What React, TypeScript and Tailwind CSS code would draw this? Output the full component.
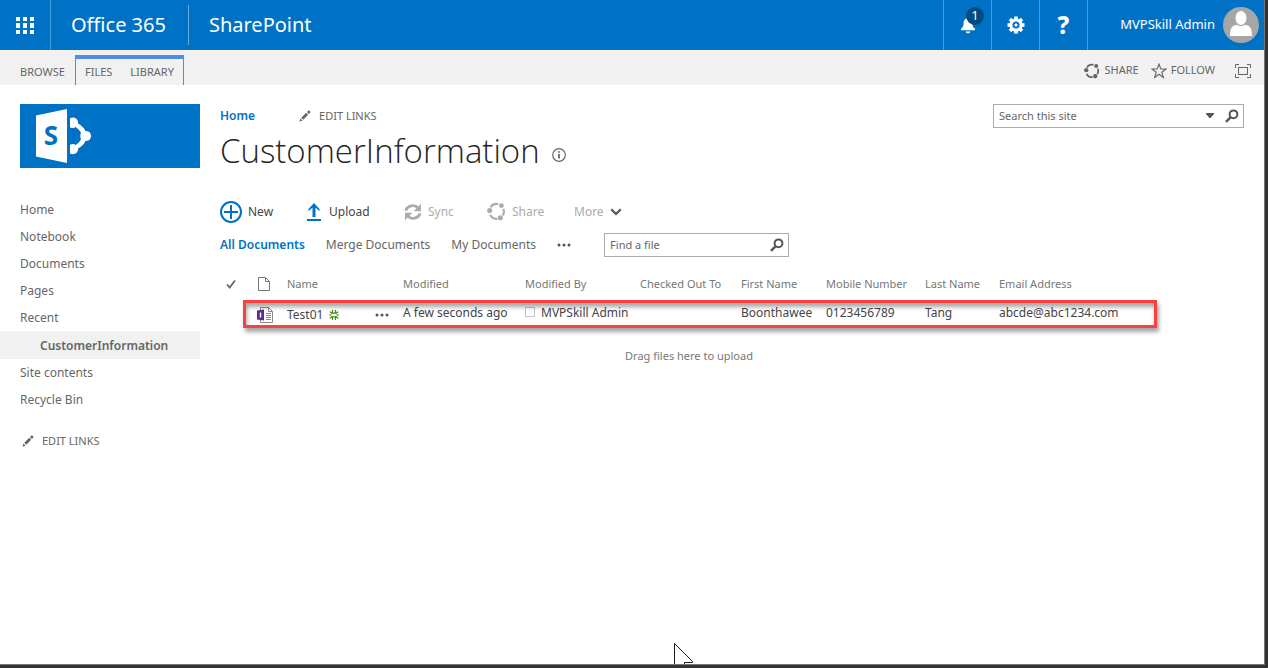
import type { ReactNode } from "react";
import clsx from "clsx";

const navItems = [
  { name: "Home" },
  { name: "Notebook" },
  { name: "Documents" },
  { name: "Pages" },
  { name: "Recent" },
  { name: "CustomerInformation", current: true },
  { name: "Site contents" },
  { name: "Recycle Bin" },
];

const columns = [
  { name: "Name", width: "w-[116px]" },
  { name: "Modified", width: "w-[122px]" },
  { name: "Modified By", width: "w-[115px]" },
  { name: "Checked Out To", width: "w-[101px]" },
  { name: "First Name", width: "w-[85px]" },
  { name: "Mobile Number", width: "w-[99px]" },
  { name: "Last Name", width: "w-[74px]" },
  { name: "Email Address", width: "" },
];

function WaffleIcon() {
  return (
    <svg viewBox="0 0 18 17" fill="currentColor" className="h-[17px] w-[18px]">
      {[0, 6, 13].map((y) =>
        [0, 7, 14].map((x) => (
          <rect
            key={`${x}-${y}`}
            x={x}
            y={y}
            width="4"
            height={y === 6 ? 5 : 4}
          />
        )),
      )}
    </svg>
  );
}

function BellIcon() {
  return (
    <svg viewBox="0 0 16 18" fill="currentColor" className="h-[18px] w-4">
      <path d="M6.6 2.2C6.8 1 9.2 1 9.4 2.2c2.2.8 3 2.6 3 5 0 3.200.8 4.200 2.600 5.600v1.400H1v-1.400c1.800-1.400 2.600-2.400 2.600-5.600 0-2.400.8-4.200 3-5z" />
      <path d="M5.600 15.400h4.800c-.4 1.300-1.300 1.900-2.400 1.900s-2-.6-2.400-1.900z" />
    </svg>
  );
}

function GearIcon() {
  return (
    <svg viewBox="0 0 18 18" fill="currentColor" className="size-[18px]">
      {[0, 45, 90, 135].map((angle) => (
        <rect
          key={angle}
          x="7.200"
          y="0.500"
          width="3.600"
          height="17"
          transform={`rotate(${angle} 9 9)`}
        />
      ))}
      <circle cx="9" cy="9" r="6.600" />
      <circle cx="9" cy="9" r="3.600" fill="#0072c6" />
      <circle cx="9" cy="9" r="1.600" />
    </svg>
  );
}

function ShareIcon({ className }: { className: string }) {
  return (
    <svg
      viewBox="0 0 20 20"
      fill="none"
      stroke="currentColor"
      strokeWidth="2.200"
      className={className}
    >
      <path d="M3.600 5.500A7.700 7.700 0 0 1 11.800 2.300M17.200 7.200a7.700 7.700 0 0 1-.6 6.900M10.800 17.700A7.700 7.700 0 0 1 3.200 13.500" />
      <circle cx="15.200" cy="3.800" r="2.500" fill="currentColor" stroke="none" />
      <circle cx="14" cy="16.600" r="2.700" fill="currentColor" stroke="none" />
      <circle cx="2.800" cy="9" r="2.700" fill="currentColor" stroke="none" />
    </svg>
  );
}

function StarIcon() {
  return (
    <svg
      viewBox="0 0 16 16"
      fill="none"
      stroke="currentColor"
      strokeWidth="1.100"
      className="size-4"
    >
      <path d="M8 1l1.800 5H15l-4.200 3.200 1.600 5.300L8 11.300l-4.400 3.200 1.600-5.300L1 6h5.200z" />
    </svg>
  );
}

function FocusIcon() {
  return (
    <svg
      viewBox="0 0 16 14"
      fill="none"
      stroke="currentColor"
      className="h-[14px] w-4"
    >
      <path d="M.5 4V.5H4M12 .5h3.500V4M15.500 10v3.500H12M4 13.500H.5V10" />
      <rect x="3.500" y="3.500" width="9" height="7" />
    </svg>
  );
}

function PencilIcon() {
  return (
    <svg viewBox="0 0 12 12" fill="currentColor" className="size-3">
      <path d="M.3 11.700l1.200-3.200 2 2zM2.300 7.700l4.900-4.900 2 2-4.900 4.900zM8 2.100L9.300.8c.8-.8 2.700 1.100 1.900 1.900L9.900 4z" />
    </svg>
  );
}

function SearchIcon() {
  return (
    <svg
      viewBox="0 0 14 14"
      fill="none"
      stroke="currentColor"
      strokeWidth="2"
      className="size-[14px]"
    >
      <circle cx="8.500" cy="5.300" r="3.900" />
      <path d="M5.700 8.200L1 12.800" strokeWidth="2.400" />
    </svg>
  );
}

function NewIcon() {
  return (
    <svg
      viewBox="0 0 22 22"
      fill="none"
      stroke="#0072c6"
      strokeWidth="2"
      className="size-[22px]"
    >
      <circle cx="11" cy="11" r="10" />
      <path d="M11 4v14M4 11h14" />
    </svg>
  );
}

function UploadIcon() {
  return (
    <svg viewBox="0 0 14 18" fill="#0072c6" className="h-[18px] w-[14px]">
      <path d="M7 0l5.500 6v2.300L8.500 4.600V14h-3V4.600l-4 3.700V6z" />
      <rect y="16" width="14" height="2" />
    </svg>
  );
}

function SyncIcon() {
  return (
    <svg
      viewBox="0 0 18 18"
      fill="none"
      stroke="currentColor"
      strokeWidth="2.800"
      className="size-[18px]"
    >
      <path d="M1.800 7.600C3.300 2.500 10.500 1 14.200 5M16.200 10.400C14.700 15.500 7.500 17 3.800 13" />
      <path
        d="M17 .8v7.400H9.600zM1 17.200V9.800h7.400z"
        fill="currentColor"
        stroke="none"
      />
    </svg>
  );
}

function EllipsisIcon() {
  return (
    <svg viewBox="0 0 14 4" fill="#555" className="h-1 w-[14px]">
      <circle cx="2" cy="2" r="1.500" />
      <circle cx="7" cy="2" r="1.500" />
      <circle cx="12" cy="2" r="1.500" />
    </svg>
  );
}

function FileIcon() {
  return (
    <svg
      viewBox="0 0 12 14"
      fill="none"
      stroke="#777"
      className="h-[14px] w-3"
    >
      <path d="M.5.5h7l4 4v9H.5zM7.500.5v4h4" />
    </svg>
  );
}

function FormIcon() {
  return (
    <svg viewBox="0 0 16 16" fill="none" className="size-4">
      <path d="M3.500 3V.5h8l4 4v11h-12V13M11.500.5v4h4" stroke="#8a8a8a" />
      <path d="M9 6.500h5M9 8.500h5M9 10.500h5M9 12.500h5" stroke="#8a8a8a" />
      <path d="M0 3.500L7 2.500v11l-7-1z" fill="#5c2d91" />
      <path d="M3.500 5.500v5" stroke="#fff" strokeWidth="1.400" />
    </svg>
  );
}

function NewItemIcon() {
  return (
    <svg
      viewBox="0 0 10 10"
      fill="none"
      stroke="#3d8c00"
      strokeWidth="1.200"
      className="size-[10px]"
    >
      <path d="M3.500 0v3M6.500 0v3M3.500 7v3M6.500 7v3M0 5h2.600M7.400 5H10M.8 1.600l2.200 1.900M9.200 1.600L7 3.500M.8 8.400L3 6.500M9.200 8.400L7 6.500" />
      <path d="M2.800 3.200h4.400M2.800 6.800h4.400" />
    </svg>
  );
}

function SiteLogo() {
  return (
    <svg viewBox="0 0 180 64" className="h-16 w-full bg-[#0072c6]">
      <path d="M16 11.500L47 5v54l-31-6.500z" fill="#fff" />
      <text
        x="31"
        y="41"
        textAnchor="middle"
        fontFamily="Open Sans, sans-serif"
        fontSize="26"
        fontWeight="700"
        fill="#0072c6"
      >
        S
      </text>
      <path
        d="M50 14.500c3-2 7.500-.5 8 3.500v1.500c3.500 2 6 4.500 7.500 7.500 7.500-.5 7.500 10.500 0 10-1.500 3-4 5.500-7.500 7.500.5 4.500-4 7-8 5v-8.700c2-1.200 4-1.200 5.500.2 2.500-1.500 4.500-3.500 5.500-6-1-2-1-4 0-6-1-2.500-3-4.500-5.500-6-1.500 1.400-3.500 1.400-5.500.2z"
        fill="#fff"
      />
    </svg>
  );
}

function HeaderButton({
  label,
  children,
}: {
  label: string;
  children: ReactNode;
}) {
  return (
    <button
      aria-label={label}
      className="relative flex w-12 items-center justify-center border-l border-[#4c9cd7]"
    >
      {children}
    </button>
  );
}

function EditLinks() {
  return (
    <button className="flex items-center gap-2 text-[11px] text-[#666]">
      <PencilIcon />
      EDIT LINKS
    </button>
  );
}

function SuiteBar() {
  return (
    <header className="flex h-[50px] bg-[#0072c6] text-white">
      <button
        aria-label="App launcher"
        className="flex w-[51px] items-center justify-center border-r border-[#4c9cd7]"
      >
        <WaffleIcon />
      </button>
      <div className="flex items-center text-xl">
        <a href="#" className="pr-[22px] pl-5">
          Office 365
        </a>
        <span className="h-10 w-px bg-[#66aadd]" />
        <a href="#" className="px-5">
          SharePoint
        </a>
      </div>
      <div className="ml-auto flex">
        <HeaderButton label="Notifications">
          <BellIcon />
          <span className="absolute top-[7px] right-[7px] flex size-[18px] items-center justify-center rounded-full bg-[#004b7f] text-[13px]">
            1
          </span>
        </HeaderButton>
        <HeaderButton label="Settings">
          <GearIcon />
        </HeaderButton>
        <HeaderButton label="Help">
          <span className="text-2xl font-extrabold">?</span>
        </HeaderButton>
        <button className="flex w-[177px] items-center justify-end gap-2 border-l border-[#4c9cd7] pr-[5px] text-[13px]">
          MVPSkill Admin
          <svg viewBox="0 0 36 36" className="size-9">
            <circle cx="18" cy="18" r="18" fill="#a6a6a6" />
            <ellipse cx="18" cy="11" rx="5.500" ry="7" fill="#fff" />
            <path
              d="M7 29c0-7 1.500-10.500 7-11.300 2.300 1.800 5.700 1.800 8 0 5.500.8 7 4.300 7 11.300z"
              fill="#fff"
            />
          </svg>
        </button>
      </div>
    </header>
  );
}

function Ribbon() {
  return (
    <div className="flex h-[35px] justify-between bg-[#f1f1f1] text-[11px] text-[#666]">
      <div className="flex items-stretch pt-[5px] pl-5">
        <button className="w-[55px] pt-1 text-left">BROWSE</button>
        <div className="flex gap-[18px] border-x border-t-4 border-x-[#4f8ee6] border-t-[#4f8ee6] px-[9px]">
          <button>FILES</button>
          <button>LIBRARY</button>
        </div>
      </div>
      <div className="flex items-center gap-3 pt-[6px] pr-[13px]">
        <button className="flex items-center gap-1">
          <ShareIcon className="size-4" />
          SHARE
        </button>
        <button className="flex items-center gap-1">
          <StarIcon />
          FOLLOW
        </button>
        <button aria-label="Focus on content" className="pl-2">
          <FocusIcon />
        </button>
      </div>
    </div>
  );
}

function SideNav() {
  return (
    <aside className="w-[200px] shrink-0">
      <a href="#" aria-label="Site home" className="block pl-5">
        <SiteLogo />
      </a>
      <nav className="pt-7">
        {navItems.map((item) => (
          <a
            key={item.name}
            href="#"
            className={clsx(
              "flex items-center pt-px text-xs text-[#666]",
              item.current
                ? "h-7 bg-[#f1f1f1] pl-10 font-semibold"
                : "h-[27px] pl-5",
            )}
          >
            {item.name}
          </a>
        ))}
      </nav>
      <div className="pt-5 pl-[22px]">
        <EditLinks />
      </div>
    </aside>
  );
}

function FileTable() {
  return (
    <div className="relative pt-[11px]">
      <table className="w-full table-fixed text-left text-xs text-[#444]">
        <thead className="text-[11px] text-[#777]">
          <tr className="h-8">
            <th className="w-[37px]">
              <svg
                viewBox="0 0 10 10"
                fill="none"
                stroke="#666"
                strokeWidth="1.800"
                className="ml-[6px] size-[10px]"
              >
                <path d="M1 5.500L3.700 8.500 9 1.500" />
              </svg>
            </th>
            <th className="w-[30px] pl-px">
              <FileIcon />
            </th>
            {columns.map((column) => (
              <th
                key={column.name}
                className={clsx("font-normal", column.width)}
              >
                {column.name}
              </th>
            ))}
          </tr>
        </thead>
        <tbody>
          <tr className="h-[26px]">
            <td />
            <td className="pt-[3px]">
              <FormIcon />
            </td>
            <td className="pt-[3px]">
              <div className="flex items-center gap-[6px]">
                <a href="#">Test01</a>
                <NewItemIcon />
                <button aria-label="Open menu" className="mr-[14px] ml-auto">
                  <EllipsisIcon />
                </button>
              </div>
            </td>
            <td>A few seconds ago</td>
            <td className="whitespace-nowrap">
              <span className="mr-[6px] inline-block size-[10px] border border-[#c6c6c6]" />
              <a href="#">MVPSkill Admin</a>
            </td>
            <td />
            <td>Boonthawee</td>
            <td>0123456789</td>
            <td>Tang</td>
            <td>abcde@abc1234.com</td>
          </tr>
        </tbody>
      </table>
      {/* highlight around the new row */}
      <div className="pointer-events-none absolute top-[43px] right-[87px] left-[23px] h-7 border-3 border-[#fa4141] shadow-[2px_4px_4px_rgba(0,0,0,0.35),inset_1px_4px_4px_rgba(0,0,0,0.35)]" />
    </div>
  );
}

function Library() {
  return (
    <main className="min-w-0 flex-1 pr-5 pl-5">
      <div className="flex items-start justify-between">
        <div>
          <div className="flex h-6 items-center gap-11">
            <a href="#" className="text-xs font-semibold text-[#0072c6]">
              Home
            </a>
            <EditLinks />
          </div>
          <div className="flex items-center gap-3">
            <h1 className="font-['Open_Sans','Noto_Sans',sans-serif] text-[33px] leading-[46px] font-light text-[#262626]">
              CustomerInformation
            </h1>
            <svg
              viewBox="0 0 14 14"
              fill="none"
              stroke="#666"
              className="mt-2 size-[14px]"
            >
              <circle cx="7" cy="7" r="6.300" strokeWidth="1.200" />
              <path d="M7 3.200v1.600M7 6v4.600" strokeWidth="1.800" />
            </svg>
          </div>
        </div>
        <form className="flex h-6 w-[251px] items-center border border-[#ababab] pr-1 pl-[5px] text-[#555]">
          <input
            aria-label="Search this site"
            placeholder="Search this site"
            className="min-w-0 flex-1 text-[11px] outline-none placeholder:text-[#666]"
          />
          <button type="button" aria-label="Search scope">
            <svg
              viewBox="0 0 10 6"
              fill="currentColor"
              className="h-[6px] w-[10px]"
            >
              <path d="M1 0h8v1L5.500 5h-1L1 1z" />
            </svg>
          </button>
          <button type="button" aria-label="Search" className="ml-[10px]">
            <SearchIcon />
          </button>
        </form>
      </div>

      <div className="mt-6 flex h-[27px] items-center text-xs text-[#ababab]">
        <button className="flex w-[87px] items-center gap-[6px] text-[#444]">
          <NewIcon />
          New
        </button>
        <button className="flex w-[97px] items-center gap-2 text-[#444]">
          <UploadIcon />
          Upload
        </button>
        <button className="flex w-[83px] items-center gap-[6px]" disabled>
          <SyncIcon />
          Sync
        </button>
        <button className="flex w-[87px] items-center gap-[6px]" disabled>
          <ShareIcon className="size-[19px]" />
          Share
        </button>
        <button className="flex items-center gap-[6px]">
          More
          <svg
            viewBox="0 0 12 8"
            fill="none"
            stroke="#555"
            strokeWidth="2.200"
            className="h-2 w-3"
          >
            <path d="M1.200 1.200L6 6l4.800-4.800" />
          </svg>
        </button>
      </div>

      <div className="mt-2 flex h-6 items-center gap-[21px] text-xs text-[#666]">
        <a href="#" className="font-semibold text-[#0072c6]">
          All Documents
        </a>
        <a href="#">Merge Documents</a>
        <a href="#">My Documents</a>
        <button aria-label="More views">
          <EllipsisIcon />
        </button>
        <form className="ml-3 flex h-6 w-[185px] items-center border border-[#ababab] pr-1 pl-[5px] text-[#555]">
          <input
            aria-label="Find a file"
            placeholder="Find a file"
            className="min-w-0 flex-1 text-[11px] outline-none placeholder:text-[#666]"
          />
          <button type="button" aria-label="Find">
            <SearchIcon />
          </button>
        </form>
      </div>

      <FileTable />
      <p className="mt-[22px] pr-[86px] text-center text-[11px] text-[#777]">
        Drag files here to upload
      </p>
    </main>
  );
}

export default function App() {
  return (
    <div className="flex min-h-screen flex-col bg-[#333] pr-[3px] pb-[3px] font-['Noto_Sans','Open_Sans',sans-serif]">
      <div className="relative flex flex-1 flex-col overflow-hidden border-r border-b border-[#777] bg-white">
        <SuiteBar />
        <Ribbon />
        <div className="flex flex-1 pt-[19px]">
          <SideNav />
          <Library />
        </div>
        {/* mouse pointer */}
        <svg
          viewBox="0 0 20 21"
          fill="#fff"
          stroke="#1a1a2a"
          className="absolute bottom-0 left-[674px] h-[21px] w-5"
        >
          <path d="M.5 28V.5l18 18v1h-8V24" />
        </svg>
      </div>
    </div>
  );
}
